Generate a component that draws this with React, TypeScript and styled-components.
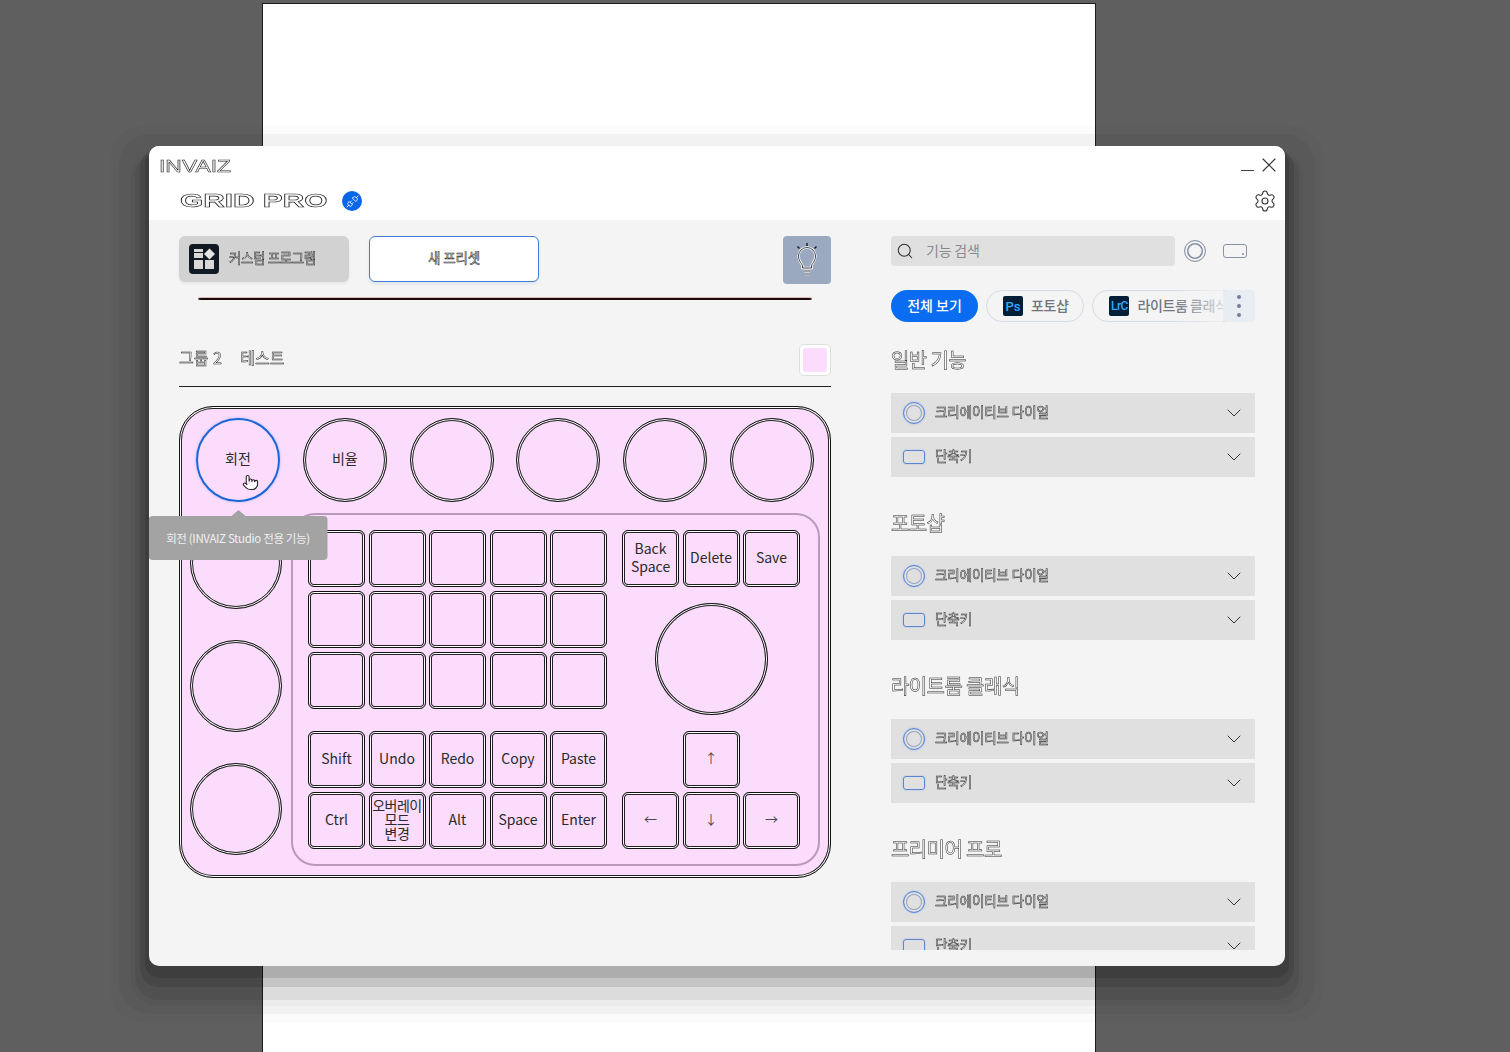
import styled, { createGlobalStyle, css } from 'styled-components';
import { ChevronDown, Pointer, Search, Settings, Unplug, X } from 'lucide-react';

const SECTIONS = ['일반 기능', '포토샵', '라이트룸 클래식', '프리미어 프로'];
const TOP_DIALS = ['회전', '비율', '', '', '', ''];
const GRID_KEYS = Array.from({ length: 15 }, (_, i) => i);
const SIDE_KEYS = ['Back Space', 'Delete', 'Save'];
const LOWER_KEYS = ['Shift', 'Undo', 'Redo', 'Copy', 'Paste', 'Ctrl', '오버레이\n모드\n변경', 'Alt', 'Space', 'Enter'];

export default function App() {
	return (
		<Stage>
			<GlobalStyle />
			<Sheet />
			<Modal>
				<Header>
					<TitleRow>
						<Brand>INVAIZ</Brand>
						<WindowButtons>
							<MinimizeLine />
							<X size={24} strokeWidth={1.1} color="#333" />
						</WindowButtons>
					</TitleRow>
					<ProductRow>
						<ProductName>GRID PRO</ProductName>
						<PlugBadge>
							<Unplug size={13} strokeWidth={1.6} color="#fff" />
						</PlugBadge>
						<GearSlot>
							<Settings size={24} strokeWidth={1.1} color="#333" />
						</GearSlot>
					</ProductRow>
				</Header>

				<Body>
					<LeftPanel>
						<Toolbar>
							<ProgramButton>
								<ProgramIcon />
								<OutlineLabel>커스텀 프로그램</OutlineLabel>
							</ProgramButton>
							<PresetButton>새 프리셋</PresetButton>
							<BulbButton>
								<BulbIcon />
							</BulbButton>
						</Toolbar>
						<ClippedEdge />
						<GroupHeader>
							<GroupTitle>그룹 2&nbsp;&nbsp;&nbsp; 테스트</GroupTitle>
							<Swatch>
								<SwatchFill />
							</Swatch>
						</GroupHeader>

						<Device>
							<TopDials>
								{TOP_DIALS.map((label, i) => (
									<Dial key={i} $active={i === 0}>
										{label}
										{i === 0 && (
											<>
												<HandCursor>
													<Pointer size={17} strokeWidth={1.5} color="#222" fill="#fff" />
												</HandCursor>
												<Tooltip>회전 (INVAIZ Studio 전용 기능)</Tooltip>
											</>
										)}
									</Dial>
								))}
							</TopDials>
							<DeviceLower>
								<SideDials>
									<BigDial />
									<BigDial />
									<BigDial />
								</SideDials>
								<KeyPanel>
									<KeyColumn>
										<KeyGrid>
											{GRID_KEYS.map((k) => (
												<Key key={k} />
											))}
										</KeyGrid>
										<KeyGrid>
											{LOWER_KEYS.map((label) => (
												<Key key={label} $tight={label.includes('\n')}>
													{label}
												</Key>
											))}
										</KeyGrid>
									</KeyColumn>
									<SideColumn>
										<SideKeys>
											{SIDE_KEYS.map((label) => (
												<Key key={label} $stacked={label.includes(' ')}>
													{label}
												</Key>
											))}
										</SideKeys>
										<Wheel />
										<ArrowKeys>
											<span />
											<ArrowKey>↑</ArrowKey>
											<span />
											<ArrowKey>←</ArrowKey>
											<ArrowKey>↓</ArrowKey>
											<ArrowKey>→</ArrowKey>
										</ArrowKeys>
									</SideColumn>
								</KeyPanel>
							</DeviceLower>
						</Device>
					</LeftPanel>

					<RightPanel>
						<SearchRow>
							<SearchBox>
								<Search size={18} strokeWidth={1.4} color="#333" />
								<SearchHint>기능 검색</SearchHint>
							</SearchBox>
							<FilterRing />
							<FilterRect />
						</SearchRow>

						<Tabs>
							<AllTab>전체 보기</AllTab>
							<AppTab>
								<AppIcon>Ps</AppIcon>
								<TabText>포토샵</TabText>
							</AppTab>
							<AppTab>
								<AppIcon $small>LrC</AppIcon>
								<TabText>라이트룸 클래식</TabText>
							</AppTab>
							<MoreButton>
								<MoreDot />
								<MoreDot />
								<MoreDot />
							</MoreButton>
						</Tabs>

						<SectionList>
							{SECTIONS.map((title) => (
								<Section key={title}>
									<SectionTitle>{title}</SectionTitle>
									<Row>
										<RowRing />
										<RowLabel>크리에이티브 다이얼</RowLabel>
										<ChevronDown size={24} strokeWidth={0.9} color="#222" />
									</Row>
									<Row>
										<RowRect />
										<RowLabel>단축키</RowLabel>
										<ChevronDown size={24} strokeWidth={0.9} color="#222" />
									</Row>
								</Section>
							))}
						</SectionList>
					</RightPanel>
				</Body>
			</Modal>
		</Stage>
	);
}

function ProgramIcon() {
	return (
		<svg width="30" height="30" viewBox="0 0 30 30">
			<rect width="30" height="30" rx="4" fill="#111a22" />
			<rect x="5" y="5" width="9" height="3" fill="#d8d8d8" />
			<rect x="5" y="9" width="9" height="5" fill="#d8d8d8" />
			<path d="M20.5 4.5l5.5 5.5-5.5 5.5-5.5-5.5z" fill="#e4e4e4" />
			<rect x="5" y="16" width="9" height="9" fill="#d8d8d8" />
			<rect x="16" y="16" width="9" height="9" fill="#d8d8d8" />
		</svg>
	);
}

const BULB_PATHS = 'M9.5 26v-2c0-2-4-4.500-4-10a8.500 8.500 0 0 1 17 0c0 5.500-4 8-4 10v2zM10.500 29h7M12 32h4';

function BulbIcon() {
	return (
		<svg width="28" height="36" viewBox="0 0 28 36" fill="none">
			<path d="M14 1v3M4.500 4.500l2 2M23.500 4.500l-2 2" stroke="#151515" strokeWidth="1.4" />
			<path d={BULB_PATHS} stroke="#fff" strokeWidth="2.4" />
			<path d={BULB_PATHS} stroke="#151515" strokeWidth="0.8" />
		</svg>
	);
}

const GlobalStyle = createGlobalStyle`
	html, body {
		margin: 0;
		background: #5f5f5f;
	}
	body {
		font-family: "Noto Sans CJK KR", "Noto Sans", sans-serif;
	}
`;

const doubleLine = css`
	border: 1px solid #111;
	box-shadow: inset 0 0 0 1px #fff, inset 0 0 0 2px #222;
`;

// outlined look of the heading text, will-change keeps the edges gray
const outlined = css`
	-webkit-text-stroke: 0.5px #1c1c1c;
	will-change: transform;
`;

const Stage = styled.div`
	position: relative;
	width: 1510px;
	height: 1052px;
	overflow: hidden;
`;

const Sheet = styled.div`
	box-sizing: border-box;
	width: 834px;
	height: 1060px;
	margin-left: 262px;
	transform: translateY(3px);
	background: #fff;
	border: 1px solid #1c1c1c;
`;

const Modal = styled.div`
	position: absolute;
	left: 149px;
	top: 146px;
	width: 1136px;
	height: 820px;
	display: flex;
	flex-direction: column;
	border-radius: 10px;
	overflow: hidden;
	background: #f4f4f4;
	box-shadow: 0 8px 0 4px rgba(0, 0, 0, 0.12), 0 12px 0 9px rgba(0, 0, 0, 0.1), 0 20px 0 14px rgba(0, 0, 0, 0.067),
		0 22px 0 18px rgba(0, 0, 0, 0.025), 0 18px 0 30px rgba(0, 0, 0, 0.04), 0 18px 0 39px rgba(0, 0, 0, 0.012);
`;

const Header = styled.header`
	height: 74px;
	background: #fff;
	flex-shrink: 0;
`;

const TitleRow = styled.div`
	box-sizing: border-box;
	display: flex;
	justify-content: space-between;
	align-items: flex-start;
	height: 41px;
	padding: 11px 4px 0 10px;
`;

const Brand = styled.div`
	font-family: "Liberation Sans", sans-serif;
	font-size: 16px;
	line-height: 20px;
	color: #fff;
	-webkit-text-stroke: 0.5px #222;
	transform: scaleX(1.43);
	transform-origin: left center;
	will-change: transform;
`;

const WindowButtons = styled.div`
	display: flex;
	align-items: center;
	gap: 3px;
	height: 15px;
`;

const MinimizeLine = styled.span`
	width: 13px;
	height: 1px;
	margin-top: 12px;
	background: #444;
`;

const ProductRow = styled.div`
	display: flex;
	align-items: center;
	height: 28px;
	padding-left: 31px;
	padding-right: 8px;
`;

const ProductName = styled.div`
	width: 162px;
	font-family: "Liberation Sans", sans-serif;
	font-size: 19px;
	font-weight: 700;
	line-height: 28px;
	white-space: nowrap;
	color: #fff;
	-webkit-text-stroke: 0.6px #222;
	transform: scaleX(1.57);
	transform-origin: left center;
	will-change: transform;
`;

const PlugBadge = styled.div`
	display: flex;
	align-items: center;
	justify-content: center;
	width: 20px;
	height: 20px;
	border-radius: 50%;
	background: #0a66e8;
`;

const GearSlot = styled.div`
	display: flex;
	margin-left: auto;
`;

const Body = styled.div`
	flex: 1;
	display: flex;
	min-height: 0;
`;

const LeftPanel = styled.div`
	width: 652px;
	margin-left: 30px;
	padding-top: 16px;
`;

const Toolbar = styled.div`
	display: flex;
	align-items: flex-start;
	gap: 20px;
	height: 48px;
`;

const ProgramButton = styled.div`
	box-sizing: border-box;
	display: flex;
	align-items: center;
	gap: 10px;
	width: 170px;
	height: 46px;
	padding-left: 10px;
	border-radius: 6px;
	background: #d2d2d2;
	box-shadow: 0 2px 3px rgba(0, 0, 0, 0.06);
`;

const OutlineLabel = styled.span`
	${outlined}
	padding-bottom: 4px;
	font-size: 13.5px;
	letter-spacing: -0.4px;
	color: #e2e2e2;
`;

const PresetButton = styled.div`
	box-sizing: border-box;
	display: flex;
	align-items: center;
	justify-content: center;
	width: 170px;
	height: 46px;
	padding-bottom: 4px;
	border: 1px solid #3f7bd6;
	border-radius: 6px;
	background: #fff;
	box-shadow: 0 2px 3px rgba(60, 110, 200, 0.12);
	font-size: 13.5px;
	letter-spacing: -0.1px;
	color: #fff;
	-webkit-text-stroke: 0.55px #1c1c1c;
`;

const BulbButton = styled.div`
	display: flex;
	align-items: center;
	justify-content: center;
	width: 48px;
	height: 48px;
	margin-left: auto;
	border-radius: 4px;
	background: #9aa8c0;
`;

const ClippedEdge = styled.div`
	width: 614px;
	height: 2px;
	margin: 14px 0 0 19px;
	border-radius: 6px / 2px;
	background: #1c0808;
	box-shadow: 0 -1px 0 #dcb9b9;
`;

const GroupHeader = styled.div`
	box-sizing: border-box;
	display: flex;
	align-items: center;
	justify-content: space-between;
	height: 87px;
	padding-top: 44px;
	padding-bottom: 10px;
	border-bottom: 1px solid #222;
`;

const GroupTitle = styled.div`
	${outlined}
	margin-bottom: 6px;
	font-size: 16px;
	word-spacing: 1px;
	color: #fff;
`;

const Swatch = styled.div`
	box-sizing: border-box;
	width: 32px;
	height: 32px;
	padding: 3px;
	border: 1px solid #dedede;
	border-radius: 5px;
	background: #fff;
`;

const SwatchFill = styled.div`
	width: 24px;
	height: 24px;
	border-radius: 3px;
	background: #fbdcfc;
`;

const Device = styled.div`
	${doubleLine}
	box-sizing: border-box;
	width: 652px;
	height: 472px;
	margin-top: 19px;
	padding: 11px 10px 0 10px;
	border-radius: 34px;
	background: #fbdcfc;
`;

const TopDials = styled.div`
	display: flex;
	justify-content: space-between;
	padding: 0 6px 0 6px;
`;

const Dial = styled.div<{ $active?: boolean }>`
	position: relative;
	box-sizing: border-box;
	display: flex;
	align-items: center;
	justify-content: center;
	width: 84px;
	height: 84px;
	padding-bottom: 4px;
	border-radius: 50%;
	font-size: 14px;
	color: #2a2a2a;
	${({ $active }) =>
		$active
			? css`
					border: 2px solid #1a66d8;
					box-shadow: 0 0 3px rgba(40, 110, 230, 0.35);
				`
			: doubleLine}
`;

const HandCursor = styled.span`
	position: absolute;
	left: 44px;
	top: 54px;
	display: flex;
`;

const Tooltip = styled.div`
	position: absolute;
	left: 50%;
	top: calc(100% + 16px);
	z-index: 2;
	transform: translateX(-50%);
	box-sizing: border-box;
	display: flex;
	align-items: center;
	justify-content: center;
	width: 179px;
	height: 44px;
	padding-bottom: 1px;
	border-radius: 4px;
	background: #a3a3a3;
	font-size: 11.5px;
	letter-spacing: -0.35px;
	white-space: nowrap;
	color: #f0f0f0;

	&::before {
		content: '';
		position: absolute;
		left: 50%;
		top: -6px;
		margin-left: -7px;
		border-left: 7px solid transparent;
		border-right: 7px solid transparent;
		border-bottom: 6px solid #a3a3a3;
	}
`;

const DeviceLower = styled.div`
	display: flex;
	gap: 9px;
	margin-top: 11px;
`;

const SideDials = styled.div`
	display: flex;
	flex-direction: column;
	gap: 31px;
	padding-top: 4px;
`;

const BigDial = styled.div`
	${doubleLine}
	box-sizing: border-box;
	width: 92px;
	height: 92px;
	border-radius: 50%;
`;

const KeyPanel = styled.div`
	box-sizing: border-box;
	display: flex;
	gap: 15px;
	width: 529px;
	height: 353px;
	padding: 15px;
	border: 2px solid #b99ab9;
	border-radius: 24px;
`;

const KeyColumn = styled.div`
	display: flex;
	flex-direction: column;
	gap: 22px;
`;

const KeyGrid = styled.div`
	display: grid;
	grid-template-columns: repeat(5, 57px);
	grid-auto-rows: 57px;
	column-gap: 3.5px;
	row-gap: 4px;
`;

const Key = styled.div<{ $stacked?: boolean; $tight?: boolean }>`
	${doubleLine}
	box-sizing: border-box;
	display: flex;
	align-items: center;
	justify-content: center;
	padding: 0 ${({ $stacked, $tight }) => ($tight ? '0' : $stacked ? '8px' : '2px')} 3px;
	border-radius: 6px;
	text-align: center;
	white-space: pre-line;
	font-size: 14px;
	letter-spacing: ${({ $tight }) => ($tight ? '-0.5px' : '0')};
	line-height: ${({ $stacked, $tight }) => ($tight ? '14px' : $stacked ? '18px' : '20px')};
	color: #2a2a2a;
`;

const ArrowKey = styled(Key)`
	font-size: 13px;
	color: #4a4a4a;
`;

const SideColumn = styled.div`
	display: flex;
	flex-direction: column;
	align-items: center;
	gap: 16px;
`;

const SideKeys = styled.div`
	display: grid;
	grid-template-columns: repeat(3, 57px);
	grid-auto-rows: 57px;
	column-gap: 3.5px;
`;

const Wheel = styled.div`
	${doubleLine}
	box-sizing: border-box;
	width: 113px;
	height: 113px;
	border-radius: 50%;
`;

const ArrowKeys = styled(SideKeys)`
	row-gap: 4px;
`;

const RightPanel = styled.div`
	width: 364px;
	margin-left: 60px;
	padding-top: 16px;
	display: flex;
	flex-direction: column;
`;

const SearchRow = styled.div`
	display: flex;
	align-items: center;
	height: 30px;
`;

const SearchBox = styled.div`
	box-sizing: border-box;
	display: flex;
	align-items: center;
	gap: 12px;
	width: 284px;
	height: 30px;
	padding-left: 5px;
	border-radius: 4px;
	background: #e0e0e0;
`;

const SearchHint = styled.span`
	padding-bottom: 2px;
	font-size: 14px;
	letter-spacing: -0.2px;
	color: #8a8a8a;
`;

const FilterRing = styled.div`
	box-sizing: border-box;
	width: 22px;
	height: 22px;
	margin-left: 9px;
	border: 1.5px solid #8792a5;
	border-radius: 50%;
	box-shadow: inset 0 0 0 2px #f4f4f4, inset 0 0 0 3.5px #8792a5;
`;

const FilterRect = styled.div`
	position: relative;
	box-sizing: border-box;
	width: 24px;
	height: 14px;
	margin-left: 17px;
	border: 1.5px solid #8792a5;
	border-radius: 3px;

	&::after {
		content: '';
		position: absolute;
		right: 2px;
		bottom: 2px;
		width: 2px;
		height: 2px;
		border-radius: 50%;
		background: #8792a5;
	}
`;

const Tabs = styled.div`
	position: relative;
	display: flex;
	gap: 8px;
	height: 32px;
	margin-top: 24px;
	overflow: hidden;
`;

const AllTab = styled.div`
	flex-shrink: 0;
	box-sizing: border-box;
	display: flex;
	align-items: center;
	justify-content: center;
	width: 87px;
	padding-bottom: 3px;
	border-radius: 16px;
	background: #0a6cf0;
	font-size: 14px;
	font-weight: 500;
	color: #fff;
`;

const AppTab = styled.div`
	flex-shrink: 0;
	box-sizing: border-box;
	display: flex;
	align-items: center;
	gap: 8px;
	padding: 0 15px 0 16px;
	border: 1px solid #d5dce8;
	border-radius: 16px;
	white-space: nowrap;
`;

const TabText = styled.span`
	margin-bottom: 3px;
	font-size: 14px;
	font-weight: 500;
	letter-spacing: -0.4px;
	color: #6f7582;
`;

const AppIcon = styled.span<{ $small?: boolean }>`
	display: flex;
	align-items: center;
	justify-content: center;
	width: 20px;
	height: 20px;
	border-radius: 2px;
	background: #001e36;
	font-family: Roboto, sans-serif;
	font-size: ${({ $small }) => ($small ? '12px' : '13px')};
	font-weight: 500;
	letter-spacing: ${({ $small }) => ($small ? '-0.6px' : '0')};
	color: #31a8ff;
`;

const MoreButton = styled.div`
	position: absolute;
	right: 0;
	top: 0;
	display: flex;
	flex-direction: column;
	align-items: center;
	justify-content: center;
	gap: 5px;
	width: 32px;
	height: 32px;
	border-radius: 4px;
	background: #e8edf4;

	&::before {
		content: '';
		position: absolute;
		right: 32px;
		top: 0;
		width: 50px;
		height: 32px;
		background: linear-gradient(to right, rgba(244, 244, 244, 0), rgba(244, 244, 244, 0.8));
	}
`;

const MoreDot = styled.span`
	width: 4px;
	height: 4px;
	border-radius: 50%;
	background: #6f7f9f;
`;

const SectionList = styled.div`
	height: 610px;
	margin-top: 18px;
	overflow: hidden;
`;

const Section = styled.section`
	margin-bottom: 26px;
`;

const SectionTitle = styled.div`
	${outlined}
	height: 53px;
	box-sizing: border-box;
	padding-top: 5px;
	font-size: 20px;
	line-height: 30px;
	letter-spacing: -0.6px;
	color: #fff;
`;

const Row = styled.div`
	box-sizing: border-box;
	display: flex;
	align-items: center;
	height: 40px;
	margin-bottom: 4px;
	padding: 0 9px 0 12px;
	background: #e0e0e0;
`;

const RowRing = styled.div`
	box-sizing: border-box;
	flex-shrink: 0;
	width: 22px;
	height: 22px;
	border: 1.5px solid #4f82dc;
	border-radius: 50%;
	box-shadow: inset 0 0 0 2px #e0e0e0, inset 0 0 0 3px #95a3bf, 0 0 2px rgba(60, 120, 240, 0.35);
`;

const RowRect = styled.div`
	box-sizing: border-box;
	flex-shrink: 0;
	width: 22px;
	height: 14px;
	border: 1.5px solid #5c85d0;
	border-radius: 3px;
	box-shadow: 0 0 2px rgba(60, 120, 240, 0.35);
`;

const RowLabel = styled.span`
	${outlined}
	flex: 1;
	margin-left: 10px;
	padding-bottom: 4px;
	font-size: 13.5px;
	letter-spacing: -0.1px;
	color: #ececec;
`;
